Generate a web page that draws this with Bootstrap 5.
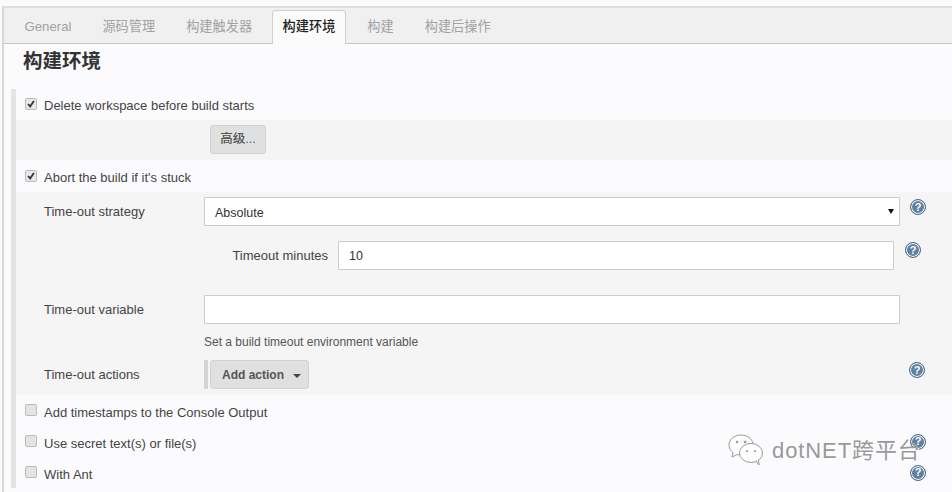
<!DOCTYPE html>
<html lang="zh">
<head>
<meta charset="utf-8">
<title>构建环境</title>
<link href="https://cdn.jsdelivr.net/npm/bootstrap@5.3.0/dist/css/bootstrap.min.css" rel="stylesheet">
<style>
html,body{height:492px;overflow:hidden;margin:0;background:#fafafa}
body{font-family:"Liberation Sans","Noto Sans CJK SC",sans-serif;font-size:13px;color:#444;position:relative}
.shell{margin:6px 0 0 2px;border-top:2px solid #dedede;border-left:2px solid #d8d8d8;height:486px;background:#fbfbfd}
.tabbar{height:36px;background:#f0f0f0;border-bottom:1px solid #c6c6c6;padding-left:5px}
.tabitem{height:36px;display:flex;align-items:center;color:#a2a2a2;font-size:13.2px;padding:1px 15.500px 0;white-space:nowrap}
.tabitem.on{background:#fbfbfb;border:1px solid #d0d0d0;border-bottom:0;border-radius:4px 4px 0 0;color:#222;margin-top:2px;height:34px;font-weight:500;padding:0 10px 2px;margin-left:4px;margin-right:5.500px}
.pagehead{font-size:19.500px;font-weight:700;color:#333;margin:0 0 0 19px;height:45px;line-height:34px}
.sect{margin-left:7px;border-left:5px solid #e4e4e4;height:399px}
.chkrow{display:flex;align-items:center;height:31px;padding:4px 0 0 9px}
.chkrow.firstrow{padding-top:3px}
.chkrow.tall{height:32px}
.form-check-input.chk{width:12px;height:12px;margin:-5px 7px 0 0;flex:none;border:1px solid #bbb;border-radius:2px;background-color:#e4e4e4}
.form-check-input.chk:checked{background-color:#e8e8e8;border-color:#bbb;background-image:url("data:image/svg+xml,%3Csvg xmlns='http://www.w3.org/2000/svg' viewBox='0 0 12 12'%3E%3Cpath d='M2.500 6 5 9 9.500 2.500' fill='none' stroke='%23333' stroke-width='2.200'/%3E%3C/svg%3E");background-size:100%}
.advrow{height:40px;background:#f4f4f5;padding:5px 0 0 194px}
.jbtn{background:#e0e0e0;border:1px solid #d2d2d2;border-radius:3px;color:#555;font-size:12px;font-weight:700;height:29px;line-height:26px;padding:0;text-align:center;display:block}
.advbtn{width:56px;font-weight:500;font-size:12.500px;line-height:27px}
.subblock{background:#f5f5f6;height:203px;padding-top:5px}
.frow{display:flex;align-items:flex-start}
.flabel{width:188px;padding:0 0 0 28px;flex:none;line-height:29px}
.form-control.jfield,.form-select.jfield{height:29px;background-color:#fff;border:1px solid #ccc;border-radius:1px;color:#333;font-size:12.500px;padding:1px 10px 0;flex:none;background-image:none}
.form-select.jfield{padding-top:3px}
.wide{width:696px}
.selwrap{position:relative;flex:none}
.selwrap::after{content:"";position:absolute;right:6px;top:12px;border:3.500px solid transparent;border-top:5px solid #111;border-bottom:0}
.helpdot{width:16px;height:16px;flex:none;display:flex;align-items:center;justify-content:center;border-radius:50%;background:#5f7fa3;border:1px solid #4f6f93;box-shadow:inset 0 0 0 1px #fff;color:#fff;font-size:11px;font-weight:700;line-height:1;margin:2px 0 0 10px}
.helpnext{margin:1px 0 0 11px}
.helprow{margin:-4px 26px 0 auto}
.minlabel{width:322px;padding:0 10px 0 0;text-align:right;line-height:29px;flex:none}
.narrow{width:556px}
.notetext{font-size:12px;color:#555;padding-left:188px;height:20px;line-height:20px;margin-top:8px}
.actbar{width:4px;height:29px;background:#d4d4d4;flex:none;margin-right:2px}
.actbtn{width:99px;padding-left:4px}
.caretmark{display:inline-block;border:4px solid transparent;border-top:4px solid #444;border-bottom:0;margin-left:9px;vertical-align:1px}
.acthelp{margin-left:600px}
.gap-a{margin-top:15px}
.gap-b{margin-top:25px}
.gap-c{margin-top:8px}
.wm{position:absolute;left:727px;top:433px;display:flex;align-items:center;gap:7px;color:#999;font-size:22px;letter-spacing:.9px;white-space:nowrap;text-shadow:1px 1px 0 #fff}
</style>
</head>
<body>
<div class="shell">
  <div class="tabbar d-flex">
    <div class="tabitem">General</div>
    <div class="tabitem">源码管理</div>
    <div class="tabitem">构建触发器</div>
    <div class="tabitem on">构建环境</div>
    <div class="tabitem">构建</div>
    <div class="tabitem">构建后操作</div>
  </div>
  <div class="pagehead">构建环境</div>
  <div class="sect">
    <div class="chkrow firstrow"><input class="form-check-input chk" type="checkbox" checked>Delete workspace before build starts</div>
    <div class="advrow"><button type="button" class="jbtn advbtn">高级...</button></div>
    <div class="chkrow tall"><input class="form-check-input chk" type="checkbox" checked>Abort the build if it's stuck</div>
    <div class="subblock">
      <div class="frow">
        <div class="flabel">Time-out strategy</div>
        <div class="selwrap wide"><select class="form-select jfield"><option>Absolute</option></select></div>
        <span class="helpdot">?</span>
      </div>
      <div class="frow gap-a">
        <div class="minlabel">Timeout minutes</div>
        <input class="form-control jfield narrow" value="10">
        <span class="helpdot helpnext">?</span>
      </div>
      <div class="frow gap-b">
        <div class="flabel">Time-out variable</div>
        <input class="form-control jfield wide">
      </div>
      <div class="notetext">Set a build timeout environment variable</div>
      <div class="frow gap-c">
        <div class="flabel">Time-out actions</div>
        <span class="actbar"></span>
        <button type="button" class="jbtn actbtn">Add action<i class="caretmark"></i></button>
        <span class="helpdot acthelp">?</span>
      </div>
    </div>
    <div class="chkrow"><input class="form-check-input chk" type="checkbox">Add timestamps to the Console Output</div>
    <div class="chkrow"><input class="form-check-input chk" type="checkbox">Use secret text(s) or file(s)<span class="helpdot helprow">?</span></div>
    <div class="chkrow"><input class="form-check-input chk" type="checkbox">With Ant<span class="helpdot helprow">?</span></div>
  </div>
</div>
<div class="wm">
  <svg width="38" height="34" viewBox="0 0 38 34"><path d="M14 2C7 2 2 6.500 2 12c0 3 1.500 5.500 4 7.500L5 24l5-2.500c1 .3 2 .4 3 .4" fill="#fff" stroke="#999" stroke-width="1"/><path d="M14 2c6 0 11 3.500 12 8.500" fill="none" stroke="#999" stroke-width="1"/><ellipse cx="24" cy="20" rx="11.500" ry="9.500" fill="#fff" stroke="#999" stroke-width="1"/><path d="m29 28 3 4-.5-5" fill="#fff" stroke="#999" stroke-width="1"/><circle cx="10" cy="9" r="1.300" fill="#999"/><circle cx="18" cy="9" r="1.300" fill="#999"/><circle cx="20" cy="18" r="1.100" fill="#999"/><circle cx="28" cy="18" r="1.100" fill="#999"/></svg>
  <span>dotNET跨平台</span>
</div>
<script src="https://cdn.jsdelivr.net/npm/bootstrap@5.3.0/dist/js/bootstrap.bundle.min.js"></script>
</body>
</html>
